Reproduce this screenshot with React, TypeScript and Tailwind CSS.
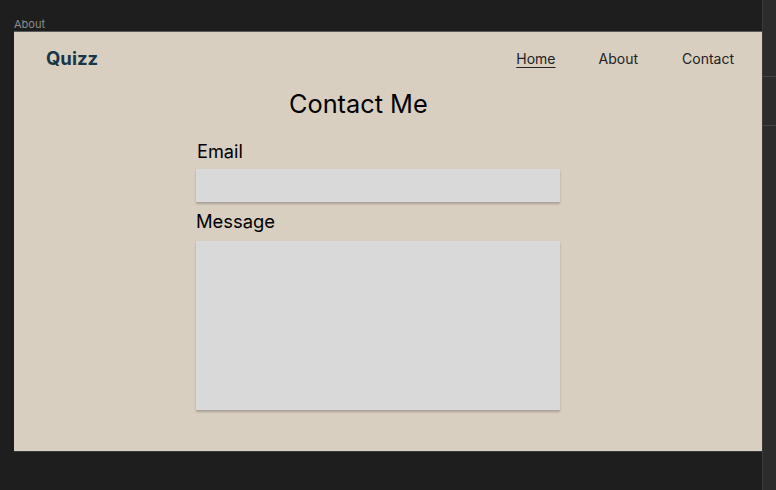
export default function App() {
  return (
    <div
      className="w-[776px] h-[490px] bg-[#1e1e1e] flex overflow-hidden"
      style={{ fontFamily: "Inter, 'Noto Sans', sans-serif" }}
    >
      <div className="flex-1 flex flex-col pl-[14px]">
        <div className="h-[31px] flex items-end pb-0 text-[11px] leading-[14px] text-[#8c8c8c]">About</div>
        <div className="w-[748px] h-[421px] bg-[#d8cfc1] border-t border-[#5a5a5a] border-b border-b-[#3a3a3a] flex flex-col">
          <nav className="h-[53px] flex items-center pl-[32px] pr-[28px]">
            <div className="text-[18.5px] font-bold text-[#173648] leading-none">Quizz</div>
            <div className="ml-auto flex items-center text-[14px] text-[#222]">
              <span className="underline underline-offset-[3px]">Home</span>
              <span className="ml-[43px]">About</span>
              <span className="ml-[44px]">Contact</span>
            </div>
          </nav>
          <h1 className="ml-[275px] mt-[4px] text-[25.3px] leading-[30px] text-black">Contact Me</h1>
          <div className="ml-[182px] w-[364px] flex flex-col mt-[21px]">
            <label className="pl-[1px] text-[18.2px] leading-[22px] text-black">Email</label>
            <div className="mt-[7px] h-[33px] bg-[#d9d9d9] shadow-[0_2px_2px_rgba(0,0,0,0.22)]" />
            <label className="mt-[8px] text-[18.4px] leading-[22px] text-black">Message</label>
            <div className="mt-[9px] h-[169px] bg-[#d9d9d9] shadow-[0_2px_2px_rgba(0,0,0,0.22)]" />
          </div>
        </div>
      </div>
      <div className="w-[14px] h-full bg-[#2c2c2c] border-l border-[#3a3a3a] flex flex-col">
        <div className="h-[77px] border-b border-[#444]" />
        <div className="h-[49px] border-b border-[#444]" />
      </div>
    </div>
  );
}
